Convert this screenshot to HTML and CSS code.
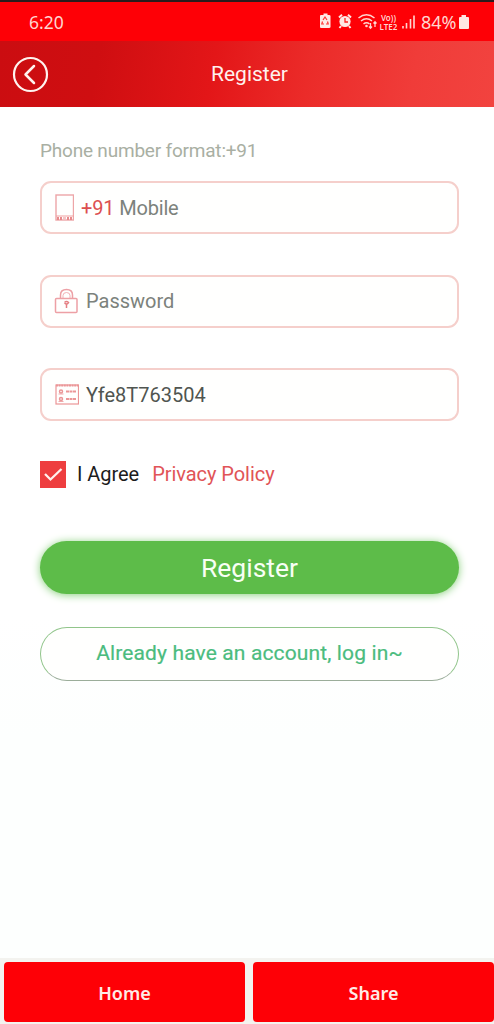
FILE: index.html
```html
<!DOCTYPE html>
<html lang="en">
<head>
<meta charset="utf-8">
<title>Register</title>
<link rel="stylesheet" href="styles.css">
</head>
<body>
<div class="screen">
  <div class="status">
    <span class="clock">6:20</span>
    <svg class="status-icons" width="59" height="20" viewBox="0 0 59 20">
      <path d="M3 3h1.500V1.500h4V3H10q1.500 0 1.500 1v11q0 1-1.500 1H2q-1 0-1-1V4q0-1 1-1z" fill="#ffe9e6"/>
      <path d="M4 8l2-3 2 3M3.500 9.500L2.800 12H5M8.500 9.500l.700 2.500H7" fill="none" stroke="#f33" stroke-width="1.200"/>
      <circle cx="26" cy="9.500" r="5.600" fill="#ffe9e6"/>
      <path d="M20 5.500l3-2.800M32 5.500l-3-2.800M22 14l-1.500 2M30 14l1.500 2" stroke="#ffe9e6" stroke-width="2"/>
      <path d="M26 6v4h3" fill="none" stroke="#f22" stroke-width="1.300"/>
      <g fill="none" stroke="#ffd5d0" stroke-width="1.500">
        <path d="M39.500 6q8-6.500 16 0M42 9q5.500-4.500 11 0M44.500 12q3-2.500 6 0"/>
        <path d="M51.500 11v5m-1.500-1.500l1.500 1.700 1.500-1.700M56 15v-5m-1.500 1.500L56 9.800l1.500 1.700" stroke-width="1.300"/>
      </g>
      <circle cx="47.500" cy="14" r="1.300" fill="#ffd5d0"/>
    </svg>
    <div class="volte"><span>Vo))</span><span>LTE2</span></div>
    <svg class="signal" width="15" height="20" viewBox="0 0 15 20"><path d="M2 14v2.500M5.500 11v5.500M9.500 7v9.500M13 3.500v13" stroke="#ffd5d0" stroke-width="1.600"/></svg>
    <span class="percent">84%</span>
    <svg class="battery" width="12" height="16" viewBox="0 0 12 16"><path d="M2 3h1.500V1h4.500v2H10q1 0 1 1v10q0 1-1 1H2q-1 0-1-1V4q0-1 1-1z" fill="#ffe6e2"/></svg>
  </div>
  <header class="header">
    <svg class="back" width="37" height="37" viewBox="0 0 37 37" fill="none" stroke="#fff3ef"><circle cx="18.500" cy="18.500" r="16.500" stroke-width="2.200"/><path d="M22 10l-8.500 8.500L22 27" stroke-width="2.500" stroke-linecap="round" stroke-linejoin="round"/></svg>
    <h1 class="title">Register</h1>
  </header>
  <main class="form">
    <div class="hint"><span>Phone number format:+91</span></div>
    <div class="field field-phone">
      <svg width="20" height="28" viewBox="0 0 20 28"><rect x="2" y="1" width="17.500" height="25" fill="none" stroke="#eda5a7" stroke-width="1.400"/><path d="M2 22h18" stroke="#f0a0a0"/><path d="M3 24.500h5.500M13 24.500h6" stroke="#e8898b" stroke-width="3" stroke-dasharray="2 1"/><path d="M9 24h3" stroke="#e8898b"/></svg>
      <span class="code">+91</span><span class="placeholder mobile">Mobile</span>
    </div>
    <div class="field">
      <svg width="24" height="26" viewBox="0 0 24 26" fill="none" stroke="#eda0a5" stroke-width="1.500"><path d="M6.500 11V7q0-5.500 6-5.500t6 5.500v4"/><path d="M9 11V7.500q0-3 3.500-3T16 7.500V11" stroke-width=".8"/><rect x="1.500" y="10.500" width="21.500" height="14" rx="1"/><path d="M10.500 14.500q2 3 4 0q-2-2-4 0M12.500 16v4" stroke="#e57f83"/></svg>
      <span class="placeholder password">Password</span>
    </div>
    <div class="field field-code">
      <svg width="25" height="22" viewBox="0 0 25 22" fill="none" stroke="#eb9697"><rect x="2" y="1" width="22.500" height="19" stroke-width="1.200"/><path d="M2 1.500h22.500" stroke-width="1.800" stroke-dasharray="2 .6"/><circle cx="7" cy="7.500" r="1.500" stroke-width="1.500"/><circle cx="7" cy="15" r="1.500" stroke-width="1.500"/><path d="M4.500 10h5M4.500 17.500h5" stroke-width=".8"/><path d="M12 7.500h10M12 15h10" stroke-width="2" stroke-dasharray="3 .5"/></svg>
      <span class="value">Yfe8T763504</span>
    </div>
    <div class="agree">
      <span class="checkbox"><svg width="27" height="27" viewBox="0 0 27 27"><path d="M5 13l5.500 5.500L21.500 8" fill="none" stroke="#fff2ee" stroke-width="2.300"/></svg></span>
      <span class="agree-text">I Agree</span><a class="policy">Privacy Policy</a>
    </div>
    <button class="submit">Register</button>
    <button class="login"><span>Already have an account, log in~</span></button>
  </main>
  <nav class="tabs"><a class="tab">Home</a><a class="tab">Share</a></nav>
</div>
</body>
</html>
```
FILE: styles.css
```css
* { box-sizing: border-box; }
body { margin: 0; font-family: Roboto, sans-serif; }
.screen { width: 494px; height: 1024px; display: flex; flex-direction: column; background: linear-gradient(#fff 60%, #fdfffe 72%); overflow: hidden; }
.status { height: 41px; border-top: 2px solid #291b1c; background: #fe0006; display: flex; align-items: center; padding: 0 24px 0 29px; color: #ffd5d0; font-family: "Noto Sans", sans-serif; }
.clock { margin-right: auto; font-size: 17.5px; }
.volte { display: grid; width: 21px; justify-items: center; font: 600 8px/9px "Noto Sans", sans-serif; white-space: nowrap; }
.signal { flex: none; margin-left: 2px; }
.percent { font-size: 18px; margin-left: 5px; width: 37px; }
.status-icons { flex: none; }
.battery { flex: none; }
.header { height: 66px; display: grid; grid-template-columns: 78px 1fr 73px; align-items: center; background: linear-gradient(100deg, #cb0d11 0, #cf0e11 20%, #e31618 43%, #eb2b29 62%, #f03c39 83%, #f2433f 100%); color: #fff1ee; }
.back { margin-left: 12px; }
.title { margin: 0; text-align: center; font-size: 21px; font-weight: 400; line-height: 28px; }
.form { flex: 1; padding: 31px 35px 0 40px; }
.hint { height: 43px; line-height: 25px; font-size: 19px; letter-spacing: -.2px; color: #a9afa3; }
.field { height: 53px; margin-bottom: 40.500px; border: 2px solid #f5cfcb; border-radius: 11px; display: flex; align-items: center; padding-left: 12px; font-size: 20px; background: #fffffe; }
.field svg { flex: none; }
.code { margin-left: 7px; color: #dc4f50; letter-spacing: -.2px; }
.placeholder { color: #7c827c; }
.mobile { margin-left: 5px; letter-spacing: -.2px; }
.password { margin-left: 8px; }
.value { margin-left: 7px; color: #505550; }
.agree { height: 27px; display: flex; align-items: center; font-size: 20px; letter-spacing: -.05px; margin-top: -1px; }
.checkbox { width: 26px; height: 27px; background: #ee3e3f; }
.checkbox svg { display: block; }
.agree-text { margin-left: 11px; color: #1c1c1c; }
.policy { margin-left: 13px; color: #e15457; }
.submit { display: block; width: 100%; height: 53px; margin: 53px 0 33px; padding: 0; border: 0; border-radius: 27px; background: #5dbc49; box-shadow: 0 1px 8px #88cf7b; color: #f8fff5; font: 26.5px Roboto, sans-serif; }
.login { display: block; width: 100%; height: 54px; padding: 0 0 2px; border: 1px solid #91c58b; border-bottom-color: #9bad9a; border-radius: 27px; background: #fffffe; color: #4bbc7e; font: 21px Roboto, sans-serif; letter-spacing: .13px; -webkit-text-stroke: .2px #4bbc7e; }
.tabs { height: 66px; padding: 4px 0 2px 4px; display: grid; grid-template-columns: 241px 241px; gap: 8px; background: #f3f3ef; }
.tab { background: #fe0006; color: #ffebe7; border-radius: 4px; display: flex; align-items: center; justify-content: center; font: 600 18px "Noto Sans", sans-serif; padding-top: 2px; }
```
